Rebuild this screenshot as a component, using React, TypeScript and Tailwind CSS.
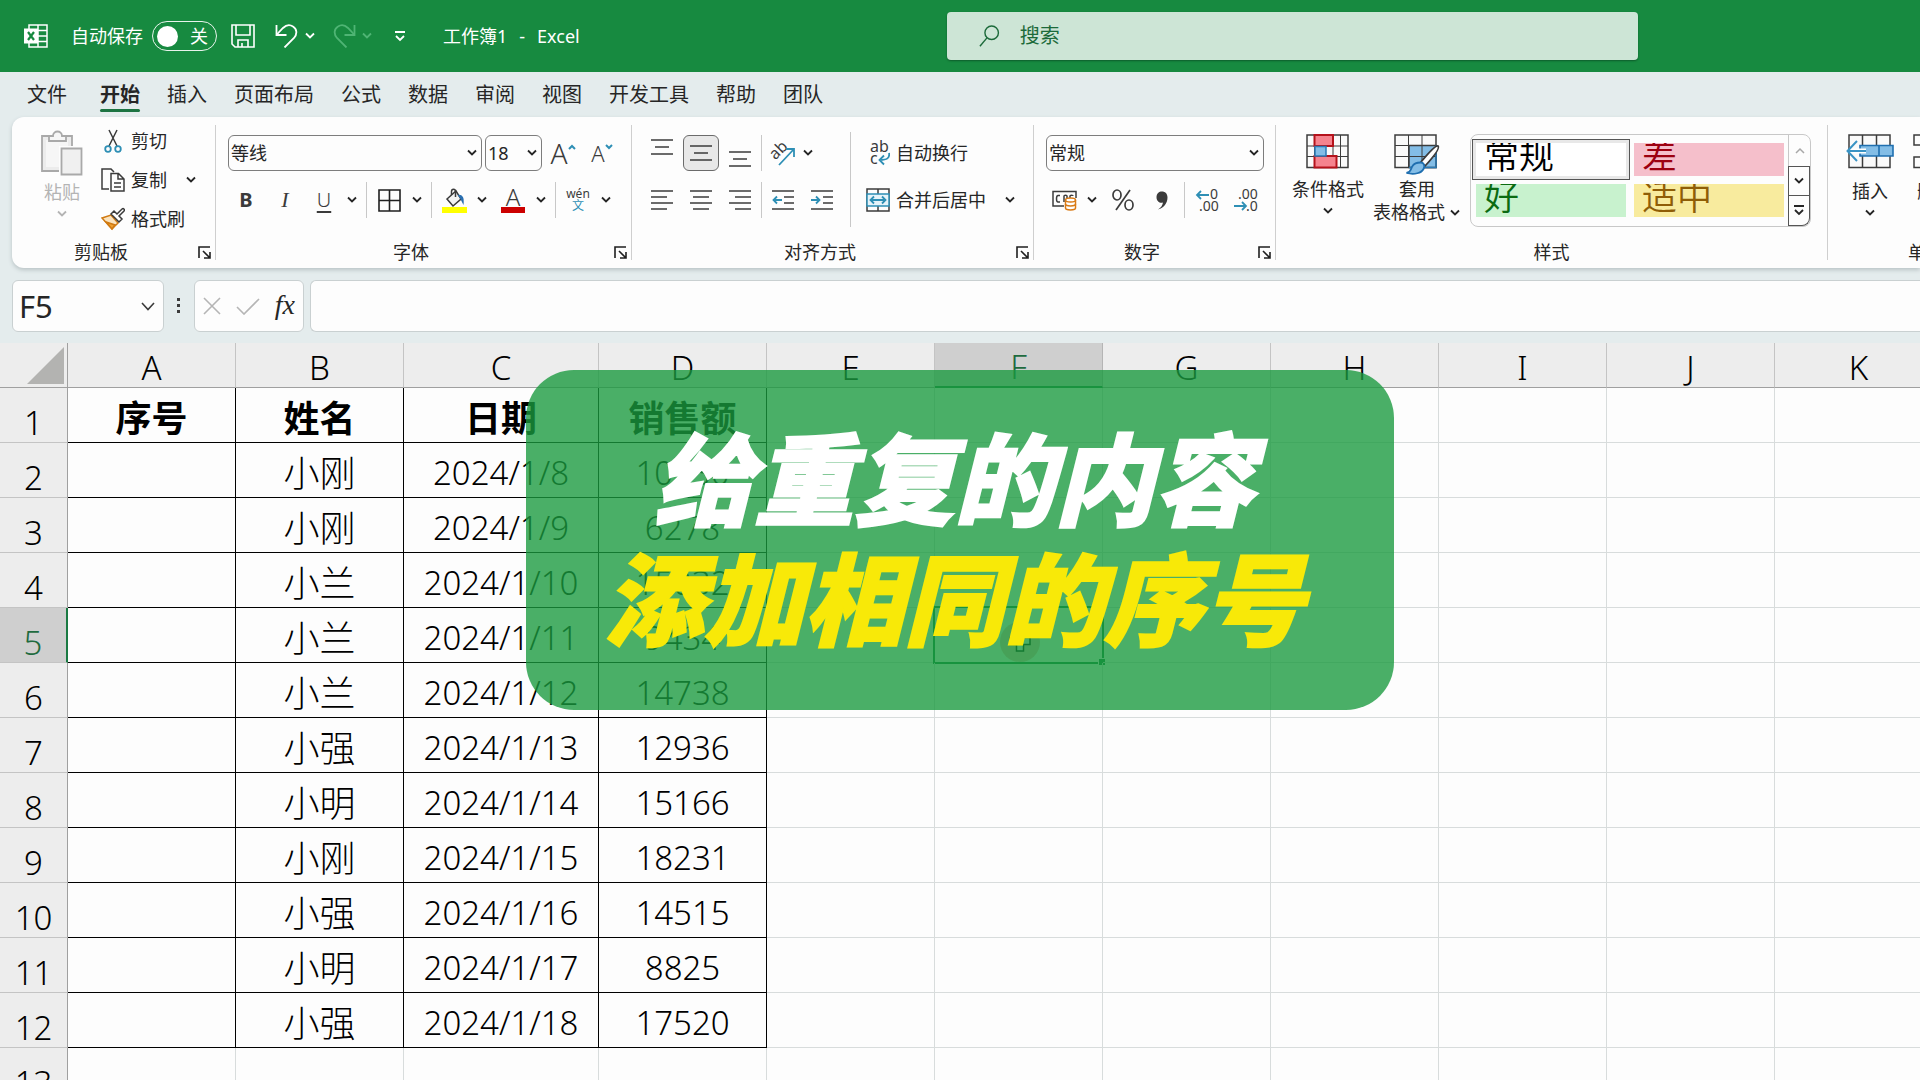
import React from "react";

const BLUE = "#2e8fb5";
const INK = "#3b3b3b";

const columns = ["A", "B", "C", "D", "E", "F", "G", "H", "I", "J", "K"];

const rows: string[][] = [
  ["序号", "姓名", "日期", "销售额"],
  ["", "小刚", "2024/1/8", "10230"],
  ["", "小刚", "2024/1/9", "6278"],
  ["", "小兰", "2024/1/10", "15032"],
  ["", "小兰", "2024/1/11", "9434"],
  ["", "小兰", "2024/1/12", "14738"],
  ["", "小强", "2024/1/13", "12936"],
  ["", "小明", "2024/1/14", "15166"],
  ["", "小刚", "2024/1/15", "18231"],
  ["", "小强", "2024/1/16", "14515"],
  ["", "小明", "2024/1/17", "8825"],
  ["", "小强", "2024/1/18", "17520"],
  [],
];

const tabs = [
  "开始",
  "插入",
  "页面布局",
  "公式",
  "数据",
  "审阅",
  "视图",
  "开发工具",
  "帮助",
  "团队",
];

const App = () => {
  return (
    <div className="relative flex h-screen w-full flex-col overflow-hidden bg-[#e4eced] font-['Noto_Sans','Noto_Sans_CJK_SC',sans-serif] text-[#262626]">
      <TitleBar />
      <Tabs />
      <Ribbon />
      <FormulaBar />
      <Sheet />
      <Caption />
    </div>
  );
};

export default App;

const TitleBar = () => {
  return (
    <header className="flex h-[72px] shrink-0 items-center bg-[#178a40] text-lg text-white">
      <div className="flex w-[947px] shrink-0 items-center pl-6">
        <ExcelLogo />
        <label className="ml-[23px] flex items-center gap-[9px] leading-6">
          自动保存
          <input type="checkbox" className="sr-only" />
          <span className="flex h-[30px] w-[65px] items-center justify-between rounded-full border border-white/90 pr-2 pl-1">
            <span className="h-[21px] w-[21px] rounded-full bg-white" />
            关
          </span>
        </label>
        <button className="ml-3.5" aria-label="保存">
          <svg width="24" height="24" viewBox="0 0 24 24" fill="none" stroke="white" strokeWidth="1.6">
            <path d="M1 1h22v22H4l-3-3z" />
            <path d="M5 1v10h14V1M7 23v-7h10v7M11 23v-4" />
          </svg>
        </button>
        <button className="ml-5" aria-label="撤消">
          <svg width="24" height="24" viewBox="0 0 24 24" fill="none" stroke="white" strokeWidth="1.8">
            <path d="M1.500 1v10h10" />
            <path d="M1.800 10.500L8 4C11 1 15 .4 18 2.500C22 5 22.500 10 19 14L9.500 23.500" />
          </svg>
        </button>
        <Chevron className="ml-[5px]" />
        <button className="ml-4 text-[#4fb474]" aria-label="恢复">
          <svg width="24" height="24" viewBox="0 0 24 24" fill="none" stroke="currentColor" strokeWidth="1.8">
            <path d="M22.500 1v10h-10" />
            <path d="M22.200 10.500L16 4C13 1 9 .4 6 2.500C2 5 1.500 10 5 14L14.500 23.500" />
          </svg>
        </button>
        <Chevron className="ml-[5px] text-[#4fb474]" />
        <button className="ml-[21px]" aria-label="自定义快速访问工具栏">
          <MoreIcon />
        </button>
        <span className="ml-[37px] flex gap-3 leading-6">
          <span>工作簿1</span>
          <span>-</span>
          <span>Excel</span>
        </span>
      </div>
      <label className="flex h-12 w-[691px] items-center gap-5 rounded bg-[#cde5d6] pl-8 shadow-[0_1px_2px_#0d5c2a]">
        <svg width="22" height="24" viewBox="0 0 22 24" fill="none" stroke="#1c6a3a" strokeWidth="1.5">
          <circle cx="13.500" cy="8.500" r="7.200" />
          <path d="M8.500 14L1 23" />
        </svg>
        <input
          type="text"
          placeholder="搜索"
          aria-label="搜索"
          className="w-full bg-transparent text-xl outline-none placeholder:text-[#1c6a3a]"
        />
      </label>
    </header>
  );
};

const Tabs = () => {
  return (
    <nav className="flex h-[45px] shrink-0 gap-[33px] pl-[27px] text-xl leading-[46px]">
      <a href="#">文件</a>
      <div className="flex gap-[27px]">
        {tabs.map((tab) => (
          <a key={tab} href="#" className="relative">
            <span className={tab === "开始" ? "font-bold" : ""}>{tab}</span>
            {tab === "开始" && (
              <span className="absolute inset-x-0 bottom-[5px] h-[3px] rounded bg-[#1d7442]" />
            )}
          </a>
        ))}
      </div>
    </nav>
  );
};

const Ribbon = () => {
  return (
    <section className="ml-3 flex h-[151px] shrink-0 overflow-hidden rounded-l-xl bg-[#fdfdfd] py-2 text-lg leading-6 shadow-[0_2px_4px_#b9c3c5]">
      <Group label="剪贴板" className="w-[204px]">
        <div className="flex pl-[26px]">
          <button className="flex w-12 flex-col items-center pt-[5px] text-[#b4b4b4]">
            <PasteIcon />
            <span className="mt-1">粘贴</span>
            <Chevron className="mt-1.5" />
          </button>
          <div className="ml-[15px] flex flex-col gap-[7px]">
            <button className="flex h-8 items-center gap-1.5">
              <CutIcon />
              剪切
            </button>
            <button className="flex h-8 items-center gap-1.5">
              <CopyIcon />
              复制
              <Chevron className="ml-3" />
            </button>
            <button className="flex h-8 items-center gap-1.5">
              <BrushIcon />
              格式刷
            </button>
          </div>
        </div>
      </Group>

      <Group label="字体" className="w-[416px]">
        <div className="flex flex-col gap-[11px] pt-2.5 pl-3">
          <div className="flex gap-[3px]">
            <Combo label="字体" value="等线" className="w-[254px]" />
            <Combo label="字号" value="18" className="w-[57px]" />
            <Tool label="增大字号">
              <span className="text-[28px] font-light">A</span>
              <svg className="mb-3" width="8" height="6" viewBox="0 0 8 6" fill="none" stroke={BLUE} strokeWidth="2">
                <path d="M1 5l3-3 3 3" />
              </svg>
            </Tool>
            <Tool label="减小字号">
              <span className="text-[22px] font-light">A</span>
              <svg className="mb-3" width="8" height="6" viewBox="0 0 8 6" fill="none" stroke={BLUE} strokeWidth="2">
                <path d="M1 1l3 3 3-3" />
              </svg>
            </Tool>
          </div>
          <div className="flex gap-[3px]">
            <Tool label="加粗">
              <span className="text-xl font-bold">B</span>
            </Tool>
            <Tool label="倾斜">
              <span className="font-['Liberation_Serif',serif] text-[22px] italic">I</span>
            </Tool>
            <Tool label="下划线" menu>
              <span className="text-xl font-light underline underline-offset-4">U</span>
            </Tool>
            <Divider />
            <Tool label="边框" menu>
              <svg width="23" height="23" viewBox="0 0 23 23" fill="none" stroke="#1f1f1f" strokeWidth="1.6">
                <path d="M1 1h21v21H1zM11.500 1v21M1 11.500h21" />
              </svg>
            </Tool>
            <Divider />
            <Tool label="填充颜色" menu>
              <svg width="25" height="25" viewBox="0 0 25 25" fill="none" stroke={INK} strokeWidth="1.500">
                <path d="M5 11L14 3l5 8-8 7z" fill="#f4f4f4" />
                <path d="M9.500 7V3.500C9.500.5 13.500.5 13.500 3.500V9" />
                <path d="M17 7.500c3 0 4.500 2.500 4 7l-2-4z" fill="#2a6fb0" stroke="#2a6fb0" />
                <rect x="0" y="19" width="25" height="6" fill="#ffff00" stroke="none" />
              </svg>
            </Tool>
            <Tool label="字体颜色" menu>
              <span className="flex w-6 flex-col items-center">
                <span className="h-5 text-2xl leading-5 font-light">A</span>
                <span className="h-1.5 w-6 bg-[#cc0000]" />
              </span>
            </Tool>
            <Divider />
            <Tool label="拼音" menu>
              <span className="flex flex-col items-center text-xs leading-3">
                <span>wén</span>
                <span className="text-[#2e8fb5]">文</span>
              </span>
            </Tool>
          </div>
        </div>
      </Group>

      <Group label="对齐方式" className="w-[402px]">
        <div className="flex pl-3">
          <div className="flex flex-col gap-[11px] pt-2.5">
            <div className="flex gap-[3px]">
              <Tool label="顶端对齐">
                <Lines d="M0 1h22M4 8h14M0 15h22" shift="mb-3" />
              </Tool>
              <Tool label="垂直居中" active>
                <Lines d="M0 1h22M4 8h14M0 15h22" shift="mb-0" />
              </Tool>
              <Tool label="底端对齐">
                <Lines d="M0 1h22M4 8h14M0 15h22" shift="mt-3" />
              </Tool>
              <span className="h-9 w-px bg-[#c8c8c8]" />
              <Tool label="方向">
                <svg width="26" height="26" viewBox="0 0 26 26" fill="none">
                  <text x="3" y="19" fontSize="16" fill={INK} transform="rotate(-45 6 17)">ab</text>
                  <path d="M9 25L24 9M16 9h8v8" stroke={BLUE} strokeWidth="1.800" />
                </svg>
              </Tool>
              <button className="flex h-9 w-2 items-center justify-center" aria-label="方向菜单">
                <Chevron />
              </button>
            </div>
            <div className="flex gap-[3px]">
              <Tool label="左对齐">
                <Lines d="M0 1h22M0 7h16M0 13h22M0 19h16" shift="mb-0" />
              </Tool>
              <Tool label="居中">
                <Lines d="M0 1h22M3 7h16M0 13h22M3 19h16" shift="mb-0" />
              </Tool>
              <Tool label="右对齐">
                <Lines d="M0 1h22M6 7h16M0 13h22M6 19h16" shift="mb-0" />
              </Tool>
              <span className="h-9 w-px bg-[#c8c8c8]" />
              <Tool label="减少缩进量">
                <svg width="22" height="20" viewBox="0 0 22 20" fill="none" stroke={INK} strokeWidth="1.600">
                  <path d="M0 1h22M12 7h10M12 13h10M0 19h22" />
                  <path d="M10 10H1.500M5 6.500L1.500 10 5 13.500" stroke={BLUE} strokeWidth="1.800" />
                </svg>
              </Tool>
              <Tool label="增加缩进量">
                <svg width="22" height="20" viewBox="0 0 22 20" fill="none" stroke={INK} strokeWidth="1.600">
                  <path d="M0 1h22M12 7h10M12 13h10M0 19h22" />
                  <path d="M0 10h8.500M5 6.500L8.500 10 5 13.500" stroke={BLUE} strokeWidth="1.800" />
                </svg>
              </Tool>
            </div>
          </div>
          <span className="mt-[7px] ml-2.5 h-[95px] w-px bg-[#c8c8c8]" />
          <div className="flex flex-col gap-[11px] pt-2.5 pl-[15px]">
            <button className="flex h-9 items-center gap-1.5">
              <svg width="24" height="26" viewBox="0 0 24 26" fill="none">
                <text x="4" y="12" fontSize="16" fill={INK}>ab</text>
                <text x="4" y="24" fontSize="16" fill={INK}>c</text>
                <path d="M23 13c1 5-2 7-9 7M18 15.500L13.500 20l4.500 4.500" stroke={BLUE} strokeWidth="1.800" />
              </svg>
              自动换行
            </button>
            <button className="flex h-9 items-center gap-1.5">
              <svg width="24" height="24" viewBox="0 0 24 24" fill="none" stroke={INK} strokeWidth="1.500">
                <path d="M1 1h22v22H1zM12 1v5M12 18v5" />
                <path d="M1 6h22v12H1z" fill="#e6f3f9" stroke={BLUE} />
                <path d="M4.500 12h15M8 8.500L4.500 12 8 15.500M16 8.500l3.500 3.500-3.500 3.500" stroke={BLUE} strokeWidth="1.800" />
              </svg>
              合并后居中
              <Chevron className="ml-3" />
            </button>
          </div>
        </div>
      </Group>

      <Group label="数字" className="w-[242px]">
        <div className="flex flex-col gap-[11px] pt-2.5 pl-3">
          <Combo label="数字格式" value="常规" className="w-[218px]" />
          <div className="flex gap-[3px]">
            <Tool label="会计数字格式" menu>
              <svg width="25" height="21" viewBox="0 0 25 21" fill="none" stroke={INK} strokeWidth="1.500">
                <path d="M12 16H1V1.500h23V8" />
                <path d="M8 5.500H6C4 5.500 4 12 6 12h2M12 12V6c0-1 3-1 3 0v2M18 8V6c0-1 3-1 3 0" />
                <path d="M13.500 10v8c0 2.500 10 2.500 10 0v-8" fill="#fff" stroke="#d97b16" />
                <ellipse cx="18.500" cy="10" rx="5" ry="2" fill="#fff" stroke="#d97b16" />
                <path d="M13.500 14c0 2.500 10 2.500 10 0" stroke="#d97b16" />
              </svg>
            </Tool>
            <Tool label="百分比样式">
              <svg width="22" height="22" viewBox="0 0 22 22" fill="none" stroke={INK} strokeWidth="1.700">
                <ellipse cx="5" cy="6" rx="4" ry="5" />
                <ellipse cx="17" cy="16" rx="4" ry="5" />
                <path d="M18 1L4 21" />
              </svg>
            </Tool>
            <Tool label="千位分隔样式">
              <svg width="12" height="19" viewBox="0 0 12 19" fill={INK}>
                <path d="M6 .5c3 0 5.500 2 5.500 6C11.500 12 8 17 2 18.500c3-2 4.500-4 5-7-3 1-6.500-1-6.500-5.300C.5 2.500 3 .5 6 .5z" />
              </svg>
            </Tool>
            <Divider />
            <Tool label="增加小数位数">
              <svg width="24" height="24" viewBox="0 0 24 24" fill="none">
                <text x="15" y="11" fontSize="14" fill={INK}>0</text>
                <text x="4" y="23" fontSize="14" fill={INK}>.00</text>
                <path d="M14 7H2M6 3L2 7l4 4" stroke={BLUE} strokeWidth="1.800" />
              </svg>
            </Tool>
            <Tool label="减少小数位数">
              <svg width="24" height="24" viewBox="0 0 24 24" fill="none">
                <text x="4" y="11" fontSize="14" fill={INK}>.00</text>
                <text x="12" y="23" fontSize="14" fill={INK}>.0</text>
                <path d="M0 18h12M8 14l4 4-4 4" stroke={BLUE} strokeWidth="1.800" />
              </svg>
            </Tool>
          </div>
        </div>
      </Group>

      <Group label="样式" launcher={false} className="w-[552px]">
        <div className="flex h-[103px] pt-[9px] pl-3">
          <button className="flex w-20 flex-col items-center">
            <svg className="shrink-0" width="44" height="42" viewBox="0 0 44 42" fill="none" stroke="#3c3c3c" strokeWidth="1.500">
              <path d="M1 1h41v32.500H1z" fill="#fafafa" />
              <path d="M1 12h41M1 22.500h41M8.500 1v32.500M27 1v32.500M34.500 1v32.500" strokeWidth="1" />
              <path d="M8.500 1h18.500v11H8.500zM8.500 22h22v11.500h-22z" fill="#f5838e" stroke="#b5121b" strokeWidth="2" />
              <path d="M9 12.500h11v9.500H9z" fill="#83bde6" stroke="#2a7ab5" />
            </svg>
            <span className="mt-0.5 leading-[23px]">条件格式</span>
            <Chevron className="mt-1.5" />
          </button>
          <button className="ml-[3px] flex w-[92px] flex-col items-center">
            <svg className="shrink-0" width="46" height="42" viewBox="0 0 46 42" fill="none" stroke="#3c3c3c" strokeWidth="1.500">
              <path d="M1 1h41v32.500H1z" fill="#fafafa" />
              <path d="M15 11.500h27v22H15z" fill="#83bde6" />
              <path d="M1 11.500h41M1 22.500h41M14.500 1v32.500M28 1v32.500" strokeWidth="1" />
              <path d="M15 33.500h27v-22" stroke="#2a7ab5" />
              <path d="M44 12c2 2-2 8-13 20l-4-4C37 16 42 11 44 12z" fill="#fff" strokeWidth="1.800" />
              <path d="M26.500 28.500c3 0 5 3 3 6.500-2 4-9 6-17 4 5-1 4-4 6-7 1.500-2.500 4-3.500 8-3.500z" fill="#83bde6" stroke="#1f6fb0" strokeWidth="1.800" />
            </svg>
            <span className="mt-0.5 leading-[23px]">套用</span>
            <span className="flex items-center gap-1 leading-[23px]">
              表格格式
              <Chevron />
            </span>
          </button>
          <div className="ml-[7px] flex h-[93px] w-[341px] rounded-lg border border-[#c8c8c8]">
            <div className="grid grow grid-cols-[150px_150px] content-start gap-2 pt-2 pl-[5px] font-['Noto_Sans_CJK_SC',sans-serif] text-[35px] leading-[22px] font-[350]">
              <StyleItem
                name="常规"
                className="bg-white text-black ring-3 ring-[#e8e8e8] outline-1 outline-offset-3 outline-[#555]"
              />
              <StyleItem name="差" className="bg-[#f5bfcb] text-[#9c0010]" />
              <StyleItem name="好" className="bg-[#c8f2ce] text-[#0b6b12]" />
              <StyleItem name="适中" className="bg-[#f8eb9e] text-[#8f5d06]" />
            </div>
            <div className="flex w-[22px] flex-col">
              <button className="flex h-[31px] items-center justify-center border-l border-[#c8c8c8] text-[#a8a8a8]" aria-label="上一行">
                <svg width="10" height="7" viewBox="0 0 10 7" fill="none" stroke="currentColor" strokeWidth="1.500">
                  <path d="M1 6l4-4 4 4" />
                </svg>
              </button>
              <button className="flex h-[30px] items-center justify-center border border-[#555]" aria-label="下一行">
                <Chevron />
              </button>
              <button className="flex grow items-center justify-center rounded-br-lg border border-t-0 border-[#555]" aria-label="其他">
                <MoreIcon />
              </button>
            </div>
          </div>
        </div>
      </Group>

      <Group label="单元格" launcher={false} className="w-[215px]">
        <div className="flex gap-[5px] pt-[9px] pl-3">
          <button className="flex w-[60px] flex-col items-center">
            <svg width="48" height="42" viewBox="0 0 48 42" fill="none" stroke="#3c3c3c" strokeWidth="1.500">
              <path d="M3 1h41v32.500H3zM16.500 1v32.500M30.500 1v32.500" fill="#fafafa" />
              <path d="M14 11.500h33v10.500H14zM33 11.500V22" fill="#83bde6" stroke="#1f6fb0" strokeWidth="1.600" />
              <path d="M20 17H3" stroke="#fff" strokeWidth="5" />
              <path d="M20 17H2M11 7L1.500 17 11 27" stroke="#3a93c4" strokeWidth="2" />
            </svg>
            <span className="mt-1 leading-[23px]">插入</span>
            <Chevron className="mt-1.5" />
          </button>
          <button className="flex w-[60px] flex-col items-center">
            <svg width="44" height="42" viewBox="0 0 44 42" fill="none" stroke="#3c3c3c" strokeWidth="1.500">
              <path d="M1 1h41v10H1zM1 23h41v10.500H1zM14.500 1v10M28 1v10M14.500 23v10.500M28 23v10.500" />
            </svg>
            <span className="mt-1 leading-[23px]">删除</span>
            <Chevron className="mt-1.5" />
          </button>
        </div>
      </Group>
    </section>
  );
};

const FormulaBar = () => {
  return (
    <div className="flex h-[75px] shrink-0 pt-3 pb-[11px] pl-3">
      <div className="flex w-[152px] items-center rounded-md border border-[#c9d0d1] bg-[#fdfdfd] pr-2">
        <input
          type="text"
          defaultValue="F5"
          aria-label="名称框"
          className="w-0 grow bg-transparent pl-1.5 text-[31px] outline-none"
        />
        <svg width="14" height="9" viewBox="0 0 14 9" fill="none" stroke={INK} strokeWidth="1.600">
          <path d="M1 1l6 6.500L13 1" />
        </svg>
      </div>
      <svg className="mx-[13px] self-center" width="4" height="16" viewBox="0 0 4 16" fill={INK}>
        <path d="M0 0h3v3H0zM0 6h3v3H0zM0 12h3v3H0z" />
      </svg>
      <div className="flex w-[110px] items-center justify-between rounded-md border border-[#c9d0d1] bg-[#fdfdfd] px-2">
        <button aria-label="取消">
          <svg width="18" height="18" viewBox="0 0 18 18" fill="none" stroke="#b5b5b5" strokeWidth="1.600">
            <path d="M1 1l16 16M17 1L1 17" />
          </svg>
        </button>
        <button aria-label="输入">
          <svg width="24" height="17" viewBox="0 0 24 17" fill="none" stroke="#b5b5b5" strokeWidth="1.600">
            <path d="M1 9l7 7L23 1" />
          </svg>
        </button>
        <button className="pb-0.5 font-['Liberation_Serif',serif] text-[28px] leading-8 italic" aria-label="插入函数">
          fx
        </button>
      </div>
      <input
        type="text"
        aria-label="编辑栏"
        className="ml-1.5 grow rounded-l-md border border-r-0 border-[#c9d0d1] bg-[#fdfdfd] px-3 text-[31px] outline-none"
      />
    </div>
  );
};

const Sheet = () => {
  return (
    <main className="grow overflow-hidden bg-[#fdfdfd]">
      <table className="w-px table-fixed border-separate border-spacing-0 text-center text-[33px] leading-[38px] font-light text-black">
        <colgroup>
          <col className="w-[68px]" />
          {columns.map((col) => (
            <col key={col} className={col === "C" ? "w-[195px]" : "w-[168px]"} />
          ))}
        </colgroup>
        <thead>
          <tr className="h-[45px] bg-[#ededed]">
            <th className="border-r border-b border-r-[#a0a0a0] border-b-[#a0a0a0] p-0">
              <svg className="ml-[27px] block" width="37" height="37" viewBox="0 0 37 37" fill="#b3b3b1">
                <path d="M37 0v37H0z" />
              </svg>
            </th>
            {columns.map((col) => (
              <th
                key={col}
                className={
                  col === "F"
                    ? "border-r border-b-2 border-r-[#b5b5b5] border-b-[#1a7a43] bg-[#cfcfcf] p-0 pt-[5px] font-light text-[#1f6b3f]"
                    : "border-r border-b border-r-[#c4c4c4] border-b-[#a0a0a0] p-0 pt-1.5 font-light"
                }
              >
                {col}
              </th>
            ))}
          </tr>
        </thead>
        <tbody>
          {rows.map((row, r) => (
            <tr key={r} className="h-[55px]">
              <th
                className={
                  r === 4
                    ? "border-r-2 border-b border-r-[#1a7a43] border-b-[#c4c4c4] bg-[#cfcfcf] p-0 pt-4 font-light text-[#1f6b3f]"
                    : "border-r border-b border-r-[#a0a0a0] border-b-[#c4c4c4] bg-[#ededed] p-0 pt-4 font-light"
                }
              >
                {r + 1}
              </th>
              {columns.map((col, c) => (
                <Cell key={col} text={row[c]} head={r === 0} cjk={r === 0 || c === 1} selected={r === 4 && col === "F"} />
              ))}
            </tr>
          ))}
        </tbody>
      </table>
    </main>
  );
};

type CellProps = { text?: string; head: boolean; cjk: boolean; selected: boolean };

const Cell = ({ text, head, cjk, selected }: CellProps) => {
  if (text === undefined) {
    return (
      <td className="relative border-r border-b border-[#d8dcdc] p-0">
        {selected && (
          <>
            <span className="absolute -inset-0.5 border-2 border-[#107c41]" />
            <span className="absolute -right-1 -bottom-1 h-2 w-2 border border-white bg-[#107c41]" />
            <span className="absolute top-[14px] left-[65px] h-10 w-10 rounded-full bg-[#e0807080]" />
            <svg className="absolute top-[22px] left-[74px]" width="22" height="22" viewBox="0 0 22 22" fill="white" stroke="black" strokeWidth="1.500">
              <path d="M7.500 1h7v6.500H21v7h-6.500V21h-7v-6.500H1v-7h6.500z" />
            </svg>
          </>
        )}
      </td>
    );
  }
  return (
    <td className="border-r border-b border-black p-0 pt-1.5">
      <span
        className={`${cjk ? "font-['Noto_Sans_CJK_SC',sans-serif] text-[36px]" : ""} ${head ? "font-bold" : ""}`}
      >
        {text}
      </span>
    </td>
  );
};

const Caption = () => {
  return (
    <div className="pointer-events-none absolute inset-0 flex items-center justify-center">
      <div className="flex h-[340px] w-[868px] flex-col items-center justify-center rounded-[48px] bg-[#1a993ec9] pr-3 pb-2.5 font-['Noto_Sans_CJK_SC',sans-serif] text-[100px] leading-[120px] font-black italic [-webkit-text-stroke-width:2px]">
        <p className="text-white">给重复的内容</p>
        <p className="text-[#f8e908]">添加相同的序号</p>
      </div>
    </div>
  );
};

type GroupProps = {
  label: string;
  className: string;
  launcher?: boolean;
  children: React.ReactNode;
};

const Group = ({ label, className, launcher = true, children }: GroupProps) => {
  return (
    <div className={`flex shrink-0 flex-col justify-between border-r border-[#cfcfcf] ${className}`}>
      {children}
      <div className="flex items-center gap-2 leading-4">
        <span className="grow text-center">{label}</span>
        {launcher && (
          <button className="mr-1" aria-label={`${label}设置`}>
            <svg width="13" height="13" viewBox="0 0 13 13" fill="none" stroke="#1f1f1f" strokeWidth="1.600">
              <path d="M1 12V1h11M5 5l7 7M12 6v6H6" />
            </svg>
          </button>
        )}
      </div>
    </div>
  );
};

type ToolProps = {
  label: string;
  menu?: boolean;
  active?: boolean;
  children: React.ReactNode;
};

const Tool = ({ label, menu, active, children }: ToolProps) => {
  return (
    <span className="flex">
      <button
        aria-label={label}
        className={`flex h-9 w-9 items-center justify-center text-[#3b3b3b] ${
          active ? "rounded-md border border-[#6b6b6b] bg-[#e8e8e8]" : ""
        }`}
      >
        {children}
      </button>
      {menu && (
        <button className="flex h-9 w-5 items-center justify-center" aria-label={`${label}菜单`}>
          <Chevron />
        </button>
      )}
    </span>
  );
};

const Combo = ({ label, value, className }: { label: string; value: string; className: string }) => {
  return (
    <span className={`relative ${className}`}>
      <select
        aria-label={label}
        className="h-9 w-full appearance-none rounded-md border border-[#7d7d7d] bg-[#fdfdfd] pl-0.5 outline-none"
      >
        <option>{value}</option>
      </select>
      <Chevron className="pointer-events-none absolute top-3.5 right-1" />
    </span>
  );
};

const StyleItem = ({ name, className }: { name: string; className: string }) => {
  return (
    <button className={`h-[33px] pl-2 text-left ${className}`}>
      <span className="block h-[33px] overflow-hidden">{name}</span>
    </button>
  );
};

const Divider = () => <span className="mx-px h-9 w-px bg-[#c8c8c8]" />;

const Lines = ({ d, shift }: { d: string; shift: string }) => (
  <svg className={`overflow-visible ${shift}`} width="22" height={d.includes("19") ? 20 : 16} fill="none" stroke={INK} strokeWidth="1.600">
    <path d={d} />
  </svg>
);

const Chevron = ({ className = "" }: { className?: string }) => (
  <svg className={`shrink-0 ${className}`} width="12" height="8" viewBox="0 0 12 8" fill="none" stroke="currentColor" strokeWidth="1.800">
    <path d="M2 1.500l4 4 4-4" />
  </svg>
);

const MoreIcon = () => (
  <svg width="12" height="11" viewBox="0 0 12 11" fill="none" stroke="currentColor" strokeWidth="1.800">
    <path d="M1 1h10M2 5l4 4 4-4" />
  </svg>
);

const ExcelLogo = () => (
  <svg width="24" height="24" viewBox="0 0 24 24" fill="none" stroke="white" strokeWidth="1.500">
    <path d="M5 5V1h18v22H5v-4M14 1v22M5 6.500h18M14 12h9M5 17.500h18" />
    <rect x="0" y="4.500" width="14" height="15" fill="white" stroke="none" />
    <path d="M4 8l6 8M10 8l-6 8" stroke="#178a40" strokeWidth="2.200" />
  </svg>
);

const PasteIcon = () => (
  <svg width="42" height="46" viewBox="0 0 42 46" fill="#ececec" stroke="#a9a9a9" strokeWidth="1.800">
    <path d="M1 6h30v35H1z" />
    <path d="M5 10h22v27H5z" fill="#f6f6f6" stroke="none" />
    <path d="M8 11V6h4c0-6 9-6 9 0h4v5z" fill="#f6f6f6" />
    <path d="M18 16h24v30H18z" fill="#fdfdfd" stroke="none" />
    <path d="M20.500 18.500h20v26h-20z" fill="#f0f0f0" />
  </svg>
);

const CutIcon = () => (
  <svg width="24" height="24" viewBox="0 0 24 24" fill="none" stroke={INK} strokeWidth="1.500">
    <path d="M8 1l8 16M16 1L8 17" />
    <circle cx="7" cy="20" r="2.800" stroke={BLUE} strokeWidth="1.800" />
    <circle cx="17" cy="20" r="2.800" stroke={BLUE} strokeWidth="1.800" />
  </svg>
);

const CopyIcon = () => (
  <svg width="24" height="24" viewBox="0 0 24 24" fill="none" stroke={INK} strokeWidth="1.500">
    <path d="M8 21H1V1h9l3 3" />
    <path d="M10 5.500h7.500L23 11v12H10zM17 5.500V11h6M13 15h7M13 19h7" />
  </svg>
);

const BrushIcon = () => (
  <svg width="24" height="24" viewBox="0 0 24 24" fill="none" stroke={INK} strokeWidth="1.500">
    <path d="M1 11l9-3 7 8-6 6z" fill="#fbe3bd" stroke="#d07a12" />
    <path d="M5 15l9 3-3 4z" fill="#f0a030" stroke="#d07a12" />
    <path d="M10 7l3-3 3 3 5-5c1.500-1 3 .5 2 2l-5 5 3 3-3 3z" fill="#fff" />
  </svg>
);
